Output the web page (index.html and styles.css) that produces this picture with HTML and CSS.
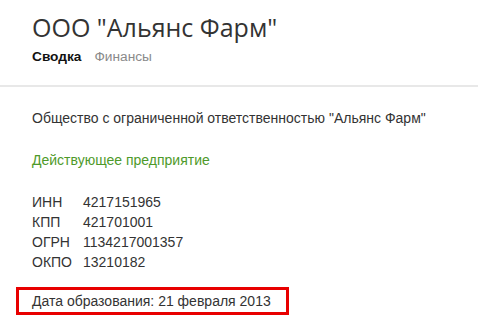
FILE: index.html
```html
<!DOCTYPE html>
<html lang="ru">
<head>
<meta charset="utf-8">
<link rel="stylesheet" href="styles.css">
</head>
<body>
<header class="head">
  <h1 class="title">ООО "Альянс Фарм"</h1>
  <nav class="tabs">
    <span class="tab tab-active">Сводка</span>
    <span class="tab">Финансы</span>
  </nav>
</header>
<main class="content">
  <p class="fullname">Общество с ограниченной ответственностью "Альянс Фарм"</p>
  <p class="status">Действующее предприятие</p>
  <dl class="codes">
    <div class="code-row"><dt>ИНН</dt><dd>4217151965</dd></div>
    <div class="code-row"><dt>КПП</dt><dd>421701001</dd></div>
    <div class="code-row"><dt>ОГРН</dt><dd>1134217001357</dd></div>
    <div class="code-row"><dt>ОКПО</dt><dd>13210182</dd></div>
  </dl>
  <div class="founded">Дата образования: 21 февраля 2013</div>
</main>
</body>
</html>
```
FILE: styles.css
```css
html, body {
  margin: 0;
  padding: 0;
  background: #fff;
}
body {
  font-family: "Liberation Sans", Arial, sans-serif;
  font-size: 14px;
  color: #333;
  width: 478px;
  height: 331px;
  overflow: hidden;
}
.head {
  box-sizing: border-box;
  padding: 10px 0 0 32px;
  height: 87px;
  border-bottom: 2px solid #e8e8e8;
}
.title {
  margin: 0;
  font-family: "Open Sans", "Liberation Sans", sans-serif;
  font-weight: 400;
  font-size: 25px;
  line-height: 34px;
  color: #333;
}
.tabs {
  display: flex;
  gap: 13px;
  margin-top: 5px;
  font-size: 13.7px;
  line-height: 16px;
}
.tab {
  color: #8a8a8a;
}
.tab-active {
  color: #111;
  font-weight: 700;
}
.content {
  padding: 21px 0 0 32px;
}
.fullname {
  margin: 0;
  line-height: 20px;
}
.status {
  margin: 22px 0 0;
  line-height: 20px;
  color: #4e9a2a;
}
.codes {
  margin: 22px 0 0;
}
.code-row {
  display: flex;
  line-height: 20px;
}
.code-row dt {
  width: 51px;
}
.code-row dd {
  margin: 0;
}
.founded {
  box-sizing: border-box;
  margin: 15px 0 0 -16px;
  width: 273px;
  height: 28px;
  border: 3px solid #e80000;
  padding-left: 13px;
  line-height: 22px;
}
```
